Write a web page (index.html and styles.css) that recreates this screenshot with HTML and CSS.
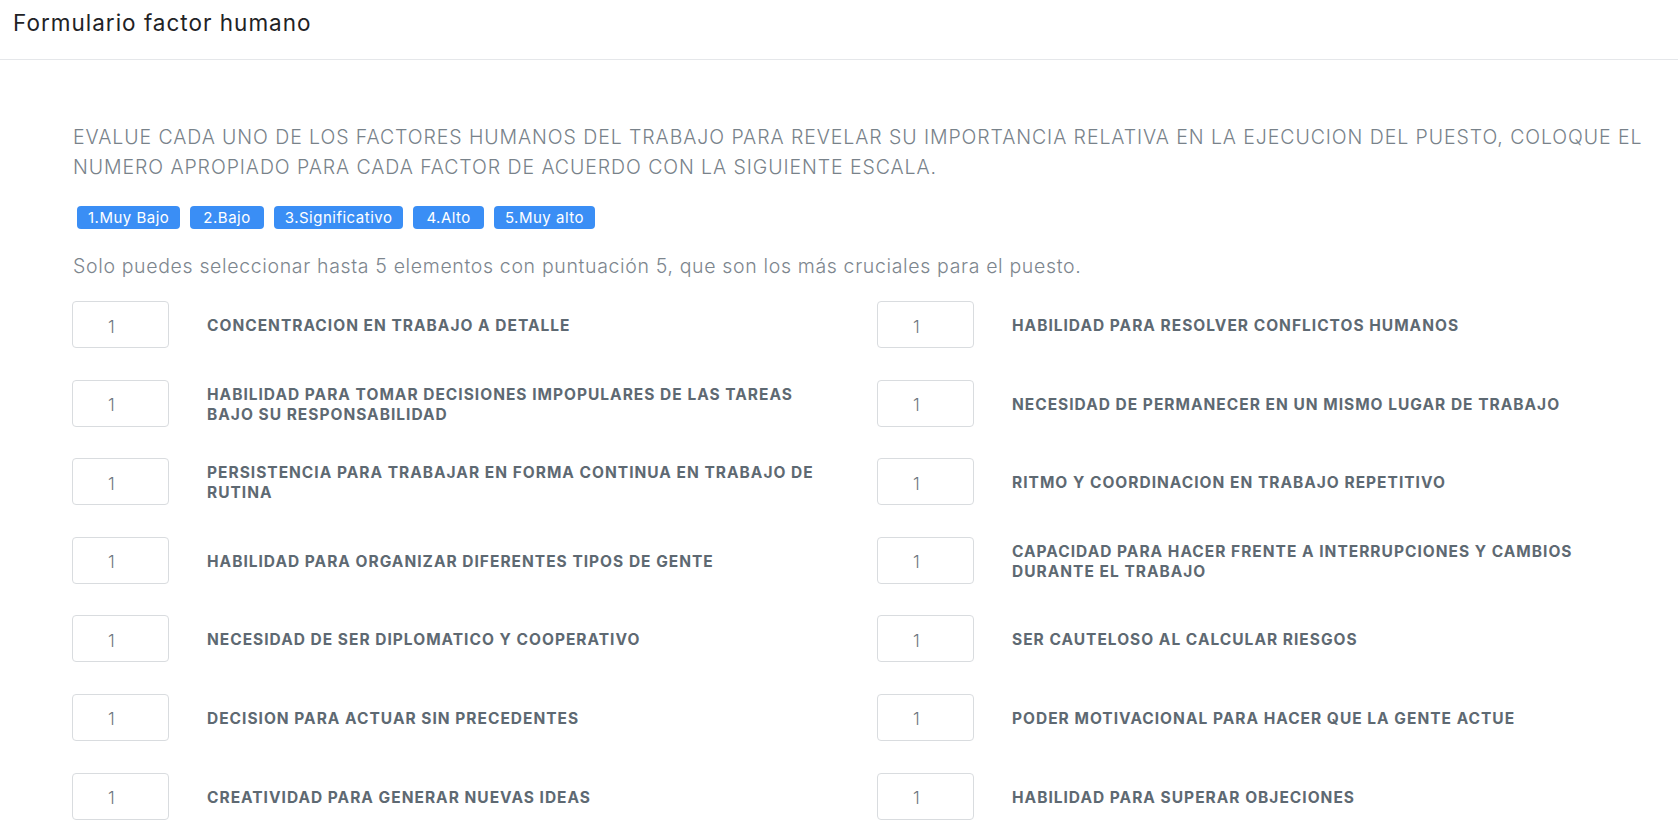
FILE: index.html
```html
<!DOCTYPE html>
<html lang="es">
<head>
<meta charset="utf-8">
<title>Formulario factor humano</title>
<link rel="stylesheet" href="styles.css">
</head>
<body>
<header class="topbar">
  <h1 class="title">Formulario factor humano</h1>
</header>
<main class="content">
  <p class="intro">EVALUE CADA UNO DE LOS FACTORES HUMANOS DEL TRABAJO PARA REVELAR SU IMPORTANCIA RELATIVA EN LA EJECUCION DEL PUESTO, COLOQUE EL NUMERO APROPIADO PARA CADA FACTOR DE ACUERDO CON LA SIGUIENTE ESCALA.</p>
  <div class="scale">
    <span class="badge">1.Muy Bajo</span>
    <span class="badge">2.Bajo</span>
    <span class="badge">3.Significativo</span>
    <span class="badge">4.Alto</span>
    <span class="badge">5.Muy alto</span>
  </div>
  <p class="note">Solo puedes seleccionar hasta 5 elementos con puntuación 5, que son los más cruciales para el puesto.</p>
  <div class="factors">
    <div class="factor"><input class="score" type="text" value="1"><span class="label">CONCENTRACION EN TRABAJO A DETALLE</span></div>
    <div class="factor"><input class="score" type="text" value="1"><span class="label">HABILIDAD PARA RESOLVER CONFLICTOS HUMANOS</span></div>
    <div class="factor"><input class="score" type="text" value="1"><span class="label">HABILIDAD PARA TOMAR DECISIONES IMPOPULARES DE LAS TAREAS BAJO SU RESPONSABILIDAD</span></div>
    <div class="factor"><input class="score" type="text" value="1"><span class="label">NECESIDAD DE PERMANECER EN UN MISMO LUGAR DE TRABAJO</span></div>
    <div class="factor"><input class="score" type="text" value="1"><span class="label">PERSISTENCIA PARA TRABAJAR EN FORMA CONTINUA EN TRABAJO DE RUTINA</span></div>
    <div class="factor"><input class="score" type="text" value="1"><span class="label">RITMO Y COORDINACION EN TRABAJO REPETITIVO</span></div>
    <div class="factor"><input class="score" type="text" value="1"><span class="label">HABILIDAD PARA ORGANIZAR DIFERENTES TIPOS DE GENTE</span></div>
    <div class="factor"><input class="score" type="text" value="1"><span class="label">CAPACIDAD PARA HACER FRENTE A INTERRUPCIONES Y CAMBIOS DURANTE EL TRABAJO</span></div>
    <div class="factor"><input class="score" type="text" value="1"><span class="label">NECESIDAD DE SER DIPLOMATICO Y COOPERATIVO</span></div>
    <div class="factor"><input class="score" type="text" value="1"><span class="label">SER CAUTELOSO AL CALCULAR RIESGOS</span></div>
    <div class="factor"><input class="score" type="text" value="1"><span class="label">DECISION PARA ACTUAR SIN PRECEDENTES</span></div>
    <div class="factor"><input class="score" type="text" value="1"><span class="label">PODER MOTIVACIONAL PARA HACER QUE LA GENTE ACTUE</span></div>
    <div class="factor"><input class="score" type="text" value="1"><span class="label">CREATIVIDAD PARA GENERAR NUEVAS IDEAS</span></div>
    <div class="factor"><input class="score" type="text" value="1"><span class="label">HABILIDAD PARA SUPERAR OBJECIONES</span></div>
  </div>
</main>
</body>
</html>
```

FILE: styles.css
```css
* { box-sizing: border-box; }
html, body { margin: 0; padding: 0; background: #ffffff; }
body {
  font-family: Inter, "Open Sans", "Liberation Sans", sans-serif;
  color: #212529;
  overflow: hidden;
}
.topbar {
  height: 60px;
  border-bottom: 1px solid #e5e7ea;
  padding: 9px 0 0 13px;
}
.title {
  margin: 0;
  font-size: 22.5px;
  line-height: 27px;
  letter-spacing: 1px;
  font-weight: 400;
  color: #1f2326;
}
.content {
  padding: 62px 20px 0 73px;
}
.intro {
  margin: 0;
  font-size: 19.5px;
  line-height: 30px;
  letter-spacing: 0.92px;
  font-weight: 300;
  color: #78828a;
}
.scale {
  display: flex;
  gap: 10px;
  margin: 24px 0 0 4px;
}
.badge {
  display: inline-flex;
  align-items: center;
  height: 23px;
  padding: 0 11px;
  border-radius: 4px;
  background: #3a8ef5;
  color: #ffffff;
  font-size: 15px;
  letter-spacing: 0.5px;
  font-weight: 400;
}
.badge:nth-child(2), .badge:nth-child(4) { padding: 0 13px; }
.note {
  margin: 24px 0 0;
  font-size: 19.5px;
  line-height: 27px;
  letter-spacing: 0.65px;
  font-weight: 300;
  color: #7d868e;
}
.factors {
  margin: 21px 0 0 -1px;
  display: grid;
  grid-template-columns: 775px 775px;
  column-gap: 30px;
  row-gap: 31.6px;
}
.factor {
  display: flex;
  align-items: center;
  height: 47px;
}
.score {
  flex: 0 0 97px;
  width: 97px;
  height: 47px;
  border: 1px solid #d9dcdf;
  border-radius: 4px;
  padding: 4px 0 0 35px;
  font-family: inherit;
  font-size: 17px;
  font-weight: 300;
  color: #6c757d;
  background: #fff;
  outline: none;
}
.label {
  margin-left: 38px;
  padding-top: 3px;
  max-width: 612px;
  font-size: 15.5px;
  line-height: 20px;
  letter-spacing: 1px;
  font-weight: 700;
  color: #5e6972;
}
```
